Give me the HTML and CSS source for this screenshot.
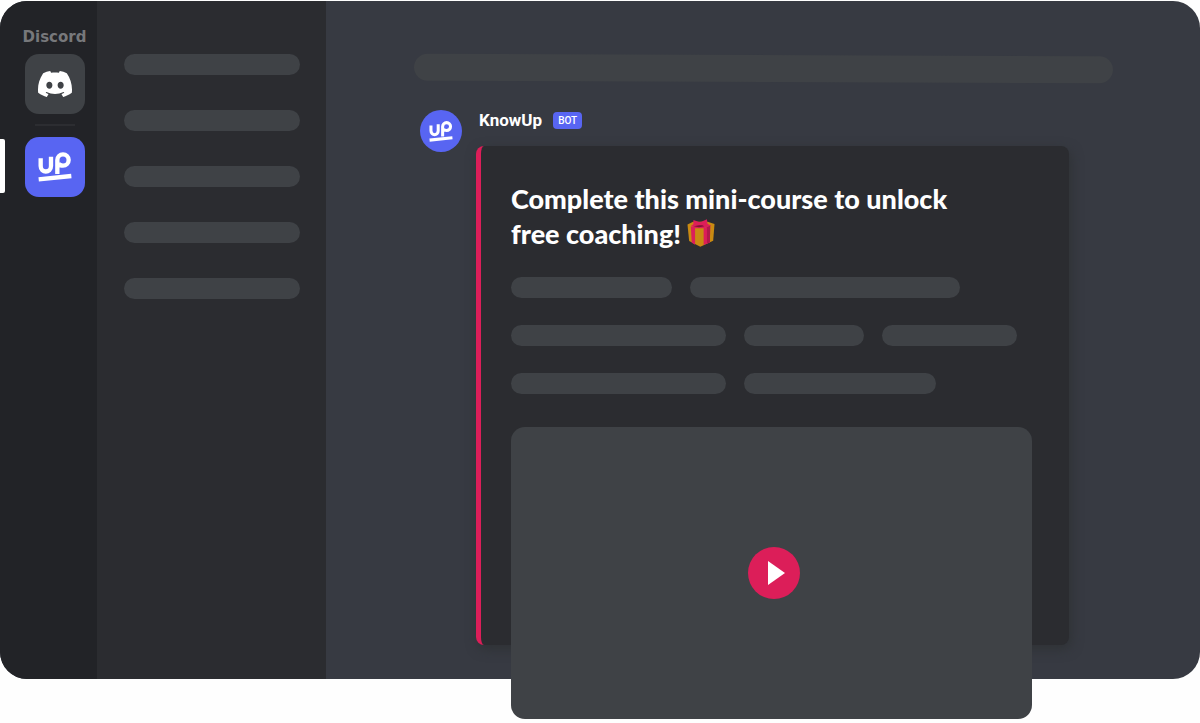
FILE: index.html
```html
<!DOCTYPE html>
<html lang="en">
<head>
    <meta charset="utf-8">
    <meta name="viewport" content="width=device-width, initial-scale=1">
    <title>KnowUp for Discord</title>
    <link rel="stylesheet" href="styles.css">
</head>
<body>

<svg class="defs" aria-hidden="true">
    <symbol id="up-logo" viewBox="0 0 100 90">
        <g fill="none" stroke="#fff" stroke-width="13">
            <path stroke-linejoin="round" d="M7 19 V42 C7 64 38 64 38 42 V14"/>
            <path stroke-linejoin="round" d="M57 66 V24 A17 17 0 1 1 74 41 C68 41 63 39 60 35"/>
            <path d="M1 82 L99 72"/>
        </g>
    </symbol>
</svg>

<div class="window">
    <nav class="servers">
        <span class="servers_title">Discord</span>
        <button type="button" class="server" aria-label="Direct messages">
            <svg class="discord_logo" viewBox="0 0 24 24" fill="#fff"><path d="M20.317 4.3698a19.7913 19.7913 0 00-4.8851-1.5152.0741.0741 0 00-.0785.0371c-.211.3753-.4447.8648-.6083 1.2495-1.8447-.2762-3.68-.2762-5.4868 0-.1636-.3933-.4058-.8742-.6177-1.2495a.077.077 0 00-.0785-.037 19.7363 19.7363 0 00-4.8852 1.515.0699.0699 0 00-.0321.0277C.5334 9.0458-.319 13.5799.0992 18.0578a.0824.0824 0 00.0312.0561c2.0528 1.5076 4.0413 2.4228 5.9929 3.0294a.0777.0777 0 00.0842-.0276c.4616-.6304.8731-1.2952 1.226-1.9942a.076.076 0 00-.0416-.1057c-.6528-.2476-1.2743-.5495-1.8722-.8923a.077.077 0 01-.0076-.1277c.1258-.0943.2517-.1923.3718-.2914a.0743.0743 0 01.0776-.0105c3.9278 1.7933 8.18 1.7933 12.0614 0a.0739.0739 0 01.0785.0095c.1202.099.246.1981.3728.2924a.077.077 0 01-.0066.1276 12.2986 12.2986 0 01-1.873.8914.0766.0766 0 00-.0407.1067c.3604.698.7719 1.3628 1.225 1.9932a.076.076 0 00.0842.0286c1.961-.6067 3.9495-1.5219 6.0023-3.0294a.077.077 0 00.0313-.0552c.5004-5.177-.8382-9.6739-3.5485-13.6604a.061.061 0 00-.0312-.0286zM8.02 15.3312c-1.1825 0-2.1569-1.0857-2.1569-2.419 0-1.3332.9555-2.4189 2.157-2.4189 1.2108 0 2.1757 1.0952 2.1568 2.419 0 1.3332-.9555 2.4189-2.1569 2.4189zm7.9748 0c-1.1825 0-2.1569-1.0857-2.1569-2.419 0-1.3332.9554-2.4189 2.1569-2.4189 1.2108 0 2.1757 1.0952 2.1568 2.419 0 1.3332-.946 2.4189-2.1568 2.4189z"/></svg>
        </button>
        <hr class="divider">
        <button type="button" class="server active" aria-label="KnowUp">
            <svg class="up_logo"><use href="#up-logo"/></svg>
        </button>
    </nav>

    <aside class="channels">
        <div class="bar"></div>
        <div class="bar"></div>
        <div class="bar"></div>
        <div class="bar"></div>
        <div class="bar"></div>
    </aside>

    <main class="chat">
        <div class="search"></div>

        <article class="message">
            <div class="avatar"><svg class="avatar_logo"><use href="#up-logo"/></svg></div>
            <div class="content">
                <div class="author">
                    <span class="name">KnowUp</span>
                    <span class="bot">BOT</span>
                </div>
                <section class="embed">
                    <h1>Complete this mini-course to unlock<br>
                        free coaching!
                        <svg class="gift" viewBox="0 0 84 85">
                            <path fill="#c98a12" d="M1 17 L18 8 H62 L83 15 L79 66 L40 84 L6 67 Z"/>
                            <path fill="#dc1e59" d="M11 22 L24 26 V78 L14 72 Z M50 28 L70 19 L69 71 L50 79 Z"/>
                            <path fill="#b3184a" d="M60 24 L70 19 L69 71 L60 75 Z"/>
                            <path fill="#dc1e59" d="M12 20 L24 14 H60 L72 20 L50 28 H24 Z"/>
                            <path fill="#dc1e59" d="M19 3 L36 9 L43 8 L60 1 L62 18 L44 20 L36 20 L19 23 Z"/>
                            <path fill="#7d1236" d="M20 22 L36 19 L46 19 L52 22 L36 25 Z"/>
                        </svg>
                    </h1>
                    <div class="lines">
                        <div class="line">
                            <div class="bar w161"></div>
                            <div class="bar w270"></div>
                        </div>
                        <div class="line">
                            <div class="bar w215"></div>
                            <div class="bar w120"></div>
                            <div class="bar w135"></div>
                        </div>
                        <div class="line">
                            <div class="bar w215"></div>
                            <div class="bar w192"></div>
                        </div>
                    </div>
                    <div class="video">
                        <button type="button" class="play" aria-label="Play">
                            <svg class="play_icon" viewBox="0 0 17 24"><path fill="#fff" d="M0 0 L17 12 L0 24 Z"/></svg>
                        </button>
                    </div>
                </section>
            </div>
        </article>
    </main>
</div>

</body>
</html>
```
FILE: styles.css
```css
body {
    margin: 0;
    padding: 1px 0 44px;
    background: #fefefe;
    font-family: Roboto, sans-serif;
    color: #fff;
}

button {
    border: none;
    padding: 0;
    cursor: pointer;
}

svg {
    display: block;
}

.defs {
    position: absolute;
    width: 0;
    height: 0;
}

.window {
    display: grid;
    grid-template-columns: 97px 229px 1fr;
    border-radius: 27px;
    background: #373a42;
}

/* server list */
.servers {
    display: flex;
    flex-direction: column;
    align-items: center;
    padding: 28px 0 0 12px;
    border-radius: 27px 0 0 27px;
    background: #222327;
}

.servers_title {
    margin: 0 0 9px;
    font: 700 15px/16px "DejaVu Sans", sans-serif;
    color: #77787b;
}

.server {
    display: flex;
    align-items: center;
    justify-content: center;
    flex: none;
    width: 60px;
    height: 60px;
    border-radius: 14px;
    background: #3f4246;
}

.server.active {
    position: relative;
    background: #5865f2;
}

.server.active::before {
    content: "";
    position: absolute;
    left: -25px;
    top: 2px;
    width: 5px;
    height: 54px;
    border-radius: 0 2px 2px 0;
    background: #fff;
}

.discord_logo {
    width: 34px;
    height: 34px;
}

.up_logo {
    width: 34px;
    height: 30px;
}

.divider {
    width: 40px;
    height: 2px;
    margin: 10px 0 11px;
    border: none;
    background: #2c2d31;
}

/* skeleton bars */
.bar {
    height: 21px;
    border-radius: 11px;
    background: #3f4246;
}

.channels {
    display: flex;
    flex-direction: column;
    gap: 35px;
    padding: 53px 26px 0 27px;
    background: #2b2c30;
}

/* chat */
.chat {
    padding: 54px 87px 34px 88px;
}

.search {
    height: 27px;
    border-radius: 14px;
    background: #3f4246;
    transform: rotate(.2deg);
}

.message {
    display: flex;
    gap: 14px;
    margin: 28px 44px 0 6px;
}

.avatar {
    display: flex;
    align-items: center;
    justify-content: center;
    flex: none;
    width: 42px;
    height: 42px;
    border-radius: 50%;
    background: #5865f2;
}

.avatar_logo {
    width: 24px;
    height: 21px;
}

.content {
    flex: 1;
}

.author {
    display: flex;
    align-items: center;
    gap: 11px;
    height: 20px;
    margin-bottom: 16px;
    padding-left: 3px;
}

.name {
    font-size: 17px;
    font-weight: 700;
}

.bot {
    padding: 0 5px;
    border-radius: 4px;
    background: #5865f2;
    font-size: 10px;
    font-weight: 500;
    line-height: 17px;
}

.embed {
    display: flow-root;
    padding: 35px 37px 0 30px;
    border-left: 5px solid #dc1e59;
    border-radius: 8px;
    background: #2b2c30;
    box-shadow: 2px 4px 12px #2f3235;
}

h1 {
    margin: 0 0 26px;
    font: 900 27px/35px Lato, sans-serif;
}

.gift {
    display: inline-block;
    width: 28px;
    height: 28px;
    vertical-align: -3px;
}

.lines {
    display: flex;
    flex-direction: column;
    gap: 27px;
    margin-bottom: 33px;
}

.line {
    display: flex;
    gap: 18px;
}

.w120 { width: 120px; }
.w135 { width: 135px; }
.w161 { width: 161px; }
.w192 { width: 192px; }
.w215 { width: 215px; }
.w270 { width: 270px; }

/* the video hangs out below the embed and the window */
.video {
    display: flex;
    align-items: center;
    justify-content: center;
    height: 292px;
    margin-bottom: -74px;
    padding-left: 5px;
    border-radius: 14px;
    background: #3f4246;
}

.play {
    display: flex;
    align-items: center;
    justify-content: center;
    width: 52px;
    height: 52px;
    padding-left: 5px;
    border-radius: 50%;
    background: #dc1e59;
}

.play_icon {
    width: 17px;
    height: 24px;
}
```
